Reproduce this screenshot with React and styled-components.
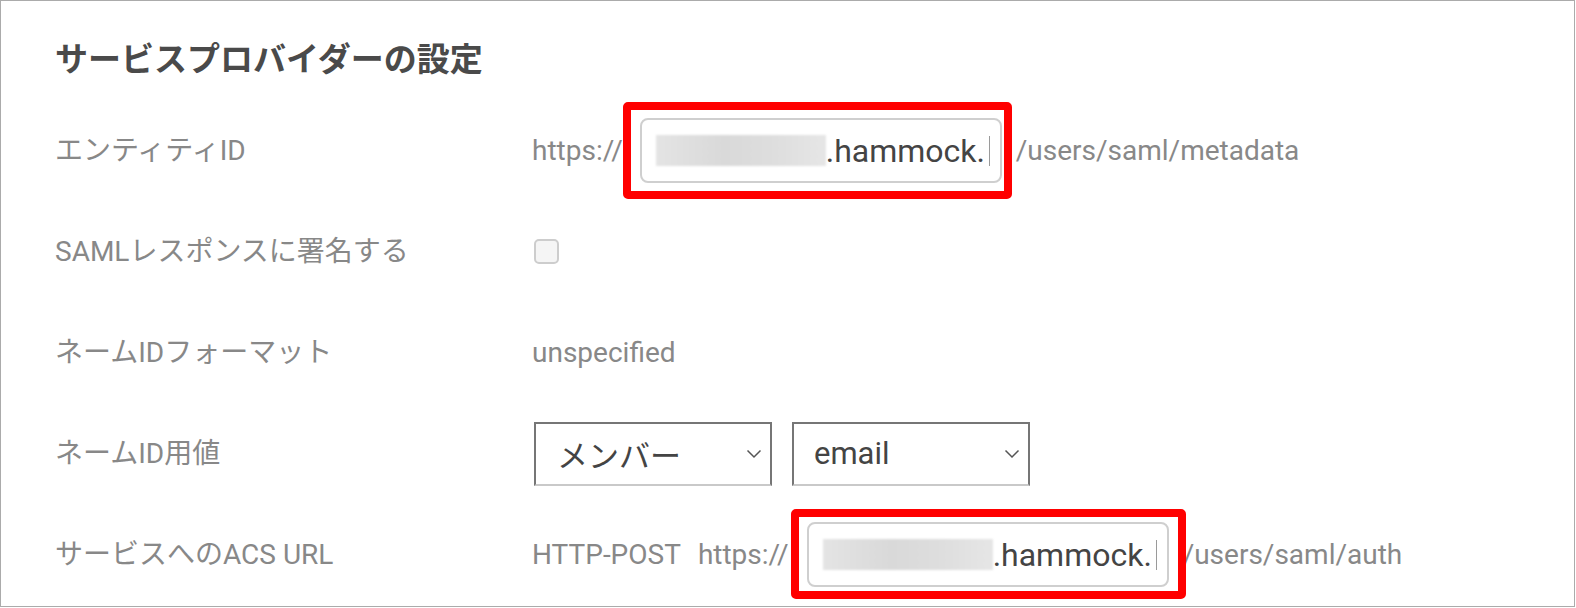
import React from 'react'
import styled, { createGlobalStyle } from 'styled-components'

const GlobalStyle = createGlobalStyle`
  body {
    margin: 0;
    background: #fff;
    font-family: Roboto, "Noto Sans CJK JP", sans-serif;
  }
`

const Frame = styled.div`
  width: 1575px;
  height: 607px;
  box-sizing: border-box;
  border: 1px solid #ababab;
  padding: 39px 0 0 54px;
  background: #fff;
`

const Title = styled.h2`
  margin: 0 0 20px;
  font-family: Roboto, "Noto Sans CJK JP", sans-serif;
  font-size: 33px;
  font-weight: 700;
  line-height: 40px;
  color: #4a4a4a;
`

const Row = styled.div`
  display: grid;
  grid-template-columns: 477px auto;
  align-items: center;
  height: 101px;
`

const Label = styled.div`
  font-size: 28px;
  line-height: 1;
  color: #888;
`

const Value = styled.div`
  display: flex;
  align-items: center;
  font-size: 28px;
  color: #888;
  white-space: nowrap;
`

const Prefix = styled.span`
  margin-right: ${p => p.gap || 0}px;
`

const InputWrap = styled.div`
  position: relative;
  margin: 0 ${p => p.right}px 0 ${p => p.left}px;
`

const Input = styled.div`
  width: 362px;
  height: 65px;
  box-sizing: border-box;
  border: 2px solid #cfcfcf;
  border-radius: 8px;
  background: #fff;
  padding: 0 10px 0 14px;
  display: flex;
  align-items: center;
  overflow: hidden;
  white-space: nowrap;
  font-size: 32px;
  color: #444;
`

const Blur = styled.span`
  flex: none;
  width: 170px;
  height: 31px;
  background: linear-gradient(90deg, #e4e4e4, #d9d9d9 40%, #dedede 70%, #e6e6e6);
  filter: blur(1px);
`

const Caret = styled.span`
  flex: none;
  width: 1px;
  height: 30px;
  margin-left: 4px;
  background: #9a9a9a;
`

const RedMark = styled.div`
  position: absolute;
  top: ${p => -p.t}px;
  bottom: ${p => -p.b}px;
  left: ${p => -p.l}px;
  right: ${p => -p.r}px;
  border: 8px solid #ff0000;
  border-radius: 5px;
  pointer-events: none;
`

const Checkbox = styled.div`
  width: 25px;
  height: 25px;
  box-sizing: border-box;
  margin-left: 2px;
  border: 2px solid #cdcdcd;
  border-radius: 5px;
  background: #f5f5f5;
`

const Selects = styled.div`
  display: flex;
  gap: 20px;
  margin-left: 2px;
`

const Select = styled.div`
  width: 238px;
  height: 64px;
  box-sizing: border-box;
  border: 2px solid #767676;
  border-bottom-color: #c9c9c9;
  background: #fff;
  display: flex;
  align-items: center;
  justify-content: space-between;
  padding: 0 8px 0 ${p => p.pad}px;
  font-size: 31px;
  color: #444;
`

const Chevron = () => (
  <svg width="16" height="10" viewBox="0 0 16 10">
    <path d="M1.5 1.5 L8 8 L14.5 1.5" fill="none" stroke="#555" strokeWidth="1.5" />
  </svg>
)

function MaskedInput({ mark }) {
  return (
    <InputWrap left={mark.ml} right={mark.mr}>
      <Input>
        <Blur />
        <span>.hammock.</span>
        <Caret />
      </Input>
      <RedMark t={mark.t} b={mark.b} l={mark.l} r={mark.r} />
    </InputWrap>
  )
}

export default function App() {
  return (
    <>
      <GlobalStyle />
      <Frame>
        <Title>サービスプロバイダーの設定</Title>
        <Row>
          <Label>エンティティID</Label>
          <Value>
            <Prefix>https://</Prefix>
            <MaskedInput mark={{ ml: 17, mr: 14, t: 16, b: 16, l: 17, r: 10 }} />
            <span>/users/saml/metadata</span>
          </Value>
        </Row>
        <Row>
          <Label>SAMLレスポンスに署名する</Label>
          <Value>
            <Checkbox />
          </Value>
        </Row>
        <Row>
          <Label>ネームIDフォーマット</Label>
          <Value>unspecified</Value>
        </Row>
        <Row>
          <Label>ネームID用値</Label>
          <Value>
            <Selects>
              <Select pad={21}>
                <span>メンバー</span>
                <Chevron />
              </Select>
              <Select pad={20}>
                <span>email</span>
                <Chevron />
              </Select>
            </Selects>
          </Value>
        </Row>
        <Row>
          <Label>サービスへのACS URL</Label>
          <Value>
            <Prefix gap={17}>HTTP-POST</Prefix>
            <Prefix>https://</Prefix>
            <MaskedInput mark={{ ml: 18, mr: 14, t: 13, b: 12, l: 16, r: 17 }} />
            <span>/users/saml/auth</span>
          </Value>
        </Row>
      </Frame>
    </>
  )
}
